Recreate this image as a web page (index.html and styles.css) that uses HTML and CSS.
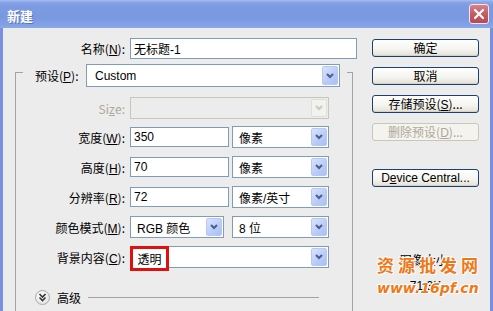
FILE: index.html
```html
<!DOCTYPE html>
<html lang="zh-CN">
<head>
<meta charset="utf-8">
<title>新建</title>
<link rel="stylesheet" href="styles.css">
</head>
<body>
<div class="window">
  <div class="titlebar">
    <span class="title">新建</span>
    <span class="close"><svg width="12" height="12" viewBox="0 0 12 12"><path d="M2 2 L10 10 M10 2 L2 10" stroke="#fff" stroke-width="2.2" stroke-linecap="round"/></svg></span>
  </div>
  <div class="body">
    <div class="form">
      <div class="name-row">
        <span class="lbl name-lbl">名称(<u>N</u>):</span>
        <div class="field name-field">无标题-1</div>
      </div>
      <div class="group">
        <div class="legend">
          <span class="legend-lbl">预设(<u>P</u>):</span>
          <div class="select preset"><span class="val latin">Custom</span><span class="drop"><svg width="8" height="6" viewBox="0 0 8 6"><path d="M1 1 L4 4 L7 1" stroke="#4a5f8a" stroke-width="2" fill="none"/></svg></span></div>
        </div>
        <div class="row row-size">
          <span class="lbl dis latin">Si<u>z</u>e:</span>
          <div class="select full disabled"><span class="val"></span><span class="drop"><svg width="8" height="6" viewBox="0 0 8 6"><path d="M1 1 L4 4 L7 1" stroke="#c9c9c0" stroke-width="2" fill="none"/></svg></span></div>
        </div>
        <div class="row">
          <span class="lbl">宽度(<u>W</u>):</span>
          <div class="field num">350</div>
          <div class="select unit"><span class="val">像素</span><span class="drop"><svg width="8" height="6" viewBox="0 0 8 6"><path d="M1 1 L4 4 L7 1" stroke="#4a5f8a" stroke-width="2" fill="none"/></svg></span></div>
        </div>
        <div class="row">
          <span class="lbl">高度(<u>H</u>):</span>
          <div class="field num">70</div>
          <div class="select unit"><span class="val">像素</span><span class="drop"><svg width="8" height="6" viewBox="0 0 8 6"><path d="M1 1 L4 4 L7 1" stroke="#4a5f8a" stroke-width="2" fill="none"/></svg></span></div>
        </div>
        <div class="row">
          <span class="lbl">分辨率(<u>R</u>):</span>
          <div class="field num">72</div>
          <div class="select unit"><span class="val">像素/英寸</span><span class="drop"><svg width="8" height="6" viewBox="0 0 8 6"><path d="M1 1 L4 4 L7 1" stroke="#4a5f8a" stroke-width="2" fill="none"/></svg></span></div>
        </div>
        <div class="row">
          <span class="lbl">颜色模式(<u>M</u>):</span>
          <div class="select mode"><span class="val">RGB 颜色</span><span class="drop"><svg width="8" height="6" viewBox="0 0 8 6"><path d="M1 1 L4 4 L7 1" stroke="#4a5f8a" stroke-width="2" fill="none"/></svg></span></div>
          <div class="select unit"><span class="val">8 位</span><span class="drop"><svg width="8" height="6" viewBox="0 0 8 6"><path d="M1 1 L4 4 L7 1" stroke="#4a5f8a" stroke-width="2" fill="none"/></svg></span></div>
        </div>
        <div class="row">
          <span class="lbl">背景内容(<u>C</u>):</span>
          <div class="select full bg"><span class="val"></span><span class="drop"><svg width="8" height="6" viewBox="0 0 8 6"><path d="M1 1 L4 4 L7 1" stroke="#4a5f8a" stroke-width="2" fill="none"/></svg></span>
            <span class="mark">透明</span>
          </div>
        </div>
        <div class="adv">
          <span class="adv-btn"><svg width="9" height="9" viewBox="0 0 9 9"><path d="M1.5 1 L4.5 4 L7.5 1 M1.5 4.5 L4.5 7.5 L7.5 4.5" stroke="#333" stroke-width="1.6" fill="none"/></svg></span>
          <span class="adv-lbl">高级</span>
          <span class="adv-line"></span>
        </div>
      </div>
    </div>
    <div class="side">
      <button class="btn b-ok">确定</button>
      <button class="btn">取消</button>
      <button class="btn">存储预设(<u>S</u>)...</button>
      <button class="btn off">删除预设(<u>D</u>)...</button>
      <button class="btn b-dc latin">D<u>e</u>vice Central...</button>
      <div class="info">
        <div class="info-t">图像大小:</div>
        <div class="info-v">71.3K</div>
      </div>
      <div class="watermark">
        <div class="wm1">资源批发网</div>
        <div class="wm2">www.16pf.cn</div>
      </div>
    </div>
  </div>
</div>
</body>
</html>
```

FILE: styles.css
```css
* { box-sizing: border-box; margin: 0; padding: 0; }
html, body { width: 493px; height: 311px; overflow: hidden; }
body {
  font: 12px "Liberation Sans", "Noto Sans CJK SC", sans-serif;
  color: #000;
  background: #ececec;
}
u { text-decoration: underline; text-underline-offset: 1px; }
.latin { font-family: "Liberation Sans", sans-serif; }

.window { width: 493px; height: 311px; display: flex; flex-direction: column; }

.titlebar {
  height: 28px;
  flex: none;
  display: flex;
  align-items: center;
  justify-content: space-between;
  padding: 0 4px 0 7px;
  background: linear-gradient(#a9bdf0 0, #8aa5e8 2px, #7d9be2 6px, #7a98e0 18px, #86a4e8 27px, #8fabec 28px);
}
.title {
  color: #fff;
  font: bold 13px "Noto Sans CJK SC", sans-serif;
  text-shadow: 1px 1px 0 #5b74c0;
  margin-top: 2px;
}
.close {
  width: 20px;
  height: 20px;
  border: 1px solid #f3e6ea;
  border-radius: 3px;
  background: linear-gradient(#d98389, #c45a62 50%, #b84a53);
  display: flex;
  align-items: center;
  justify-content: center;
}

.body {
  flex: 1;
  display: flex;
  position: relative;
  border-left: 3px solid #7790df;
  border-right: 3px solid #7790df;
  background: #ececec;
  overflow: hidden;
}

.form { width: 357px; flex: none; padding-top: 10px; }

.name-row { display: flex; align-items: center; height: 21px; }
.name-lbl { width: 122px; }
.lbl { text-align: right; margin-right: 5px; white-space: nowrap; font-family: "Noto Sans CJK SC", sans-serif; }
.lbl u, .legend-lbl u { font-family: "Liberation Sans", sans-serif; }
.lbl.dis { color: #aca899; }

.field {
  height: 21px;
  border: 1px solid #7f9db9;
  background: #fff;
  padding: 0 3px;
  display: flex;
  align-items: center;
  font-family: "Liberation Sans", "Noto Sans CJK SC", sans-serif;
}
.name-field { width: 227px; }
.num { width: 99px; height: 20px; margin-right: 3px; }

.group {
  margin: 13px 0 0 12px;
  width: 338px;
  height: 260px;
  border: 1px solid #a3a3a3;
  border-bottom: none;
}
.legend {
  display: flex;
  align-items: center;
  margin: -9px 0 0 7px;
  width: 324px;
  height: 23px;
  padding: 0 7px 0 12px;
  background: #ececec;
}
.legend-lbl { width: 51px; font-family: "Noto Sans CJK SC", sans-serif; white-space: nowrap; }

.select {
  position: relative;
  height: 22px;
  border: 1px solid #7f9db9;
  background: #fff;
  display: flex;
  align-items: center;
  justify-content: space-between;
  padding: 1px;
}
.select .val { padding-left: 5px; white-space: nowrap; font-family: "Liberation Sans", "Noto Sans CJK SC", sans-serif; }
.drop {
  width: 16px;
  height: 100%;
  border: 1px solid #b9c8f3;
  border-radius: 2px;
  background: linear-gradient(135deg, #d9e3fd, #b9cbf8 60%, #a9bff6);
  display: flex;
  align-items: center;
  justify-content: center;
}
.preset { flex: 1; height: 23px; }
.preset .val { padding-left: 7px; }
.full { width: 199px; }
.unit { width: 97px; }
.mode { width: 94px; margin-right: 8px; }
.select.disabled { border-color: #c9c7ba; background: #ececec; }
.select.disabled .drop { background: #f2f2ee; border-color: #e0e0da; }

.row { display: flex; align-items: center; height: 22px; margin-top: 8px; }
.row .lbl { width: 109px; }
.row-size { margin-top: 10px; }
.row-size + .row { margin-top: 7px; }

.mark {
  position: absolute;
  left: -1px;
  top: -1px;
  width: 39px;
  height: 25px;
  border: 3px solid #e20f0f;
  background: #fff;
  display: flex;
  align-items: center;
  justify-content: center;
  font-family: "Noto Sans CJK SC", sans-serif;
}

.adv { display: flex; align-items: center; height: 16px; margin-top: 21px; padding-left: 19px; }
.adv-btn {
  width: 15px;
  height: 15px;
  border: 1px solid #a9a9a9;
  border-radius: 50%;
  background: radial-gradient(circle at 40% 35%, #ffffff, #e6e6e6 70%, #d2d2d2);
  display: flex;
  align-items: center;
  justify-content: center;
}
.adv-lbl { margin-left: 7px; font-family: "Noto Sans CJK SC", sans-serif; }
.adv-line { width: 231px; height: 1px; background: #a3a3a3; margin-left: 7px; }

.side {
  position: relative;
  width: 107px;
  margin-left: 12px;
  padding-top: 11px;
  display: flex;
  flex-direction: column;
}
.btn {
  height: 18px;
  margin-bottom: 10px;
  border: 1px solid #1c3f74;
  border-radius: 3px;
  background: linear-gradient(#ffffff, #f4f3ee 60%, #e2e0d6);
  font: 12px "Noto Sans CJK SC", "Liberation Sans", sans-serif;
  line-height: 16px;
  color: #000;
  box-shadow: inset 0 -1px 0 #d6d2c2;
}
.btn u { font-family: "Liberation Sans", sans-serif; }
.btn.off { color: #aca899; border-color: #c9c7ba; background: #f4f3ee; box-shadow: none; }
.b-dc { margin-top: 18px; font-family: "Liberation Sans", sans-serif; }

.info { margin-top: 56px; text-align: center; }
.info-t { font-family: "Noto Sans CJK SC", sans-serif; line-height: 14px; }
.info-v { margin-top: 12px; line-height: 14px; }

.watermark {
  position: absolute;
  left: 5px;
  top: 227px;
  width: 110px;
  white-space: nowrap;
  color: #f07818;
  text-shadow: 1px 0 0 #fff, -1px 0 0 #fff, 0 1px 0 #fff, 0 -1px 0 #fff, 1px 1px 0 #fff, -1px -1px 0 #fff;
}
.wm1 { font: bold 17px "Noto Sans CJK SC", sans-serif; letter-spacing: 4px; line-height: 20px; }
.wm2 { font: bold italic 14px "DejaVu Sans", sans-serif; letter-spacing: 0; line-height: 18px; margin-top: 4px; }
```
